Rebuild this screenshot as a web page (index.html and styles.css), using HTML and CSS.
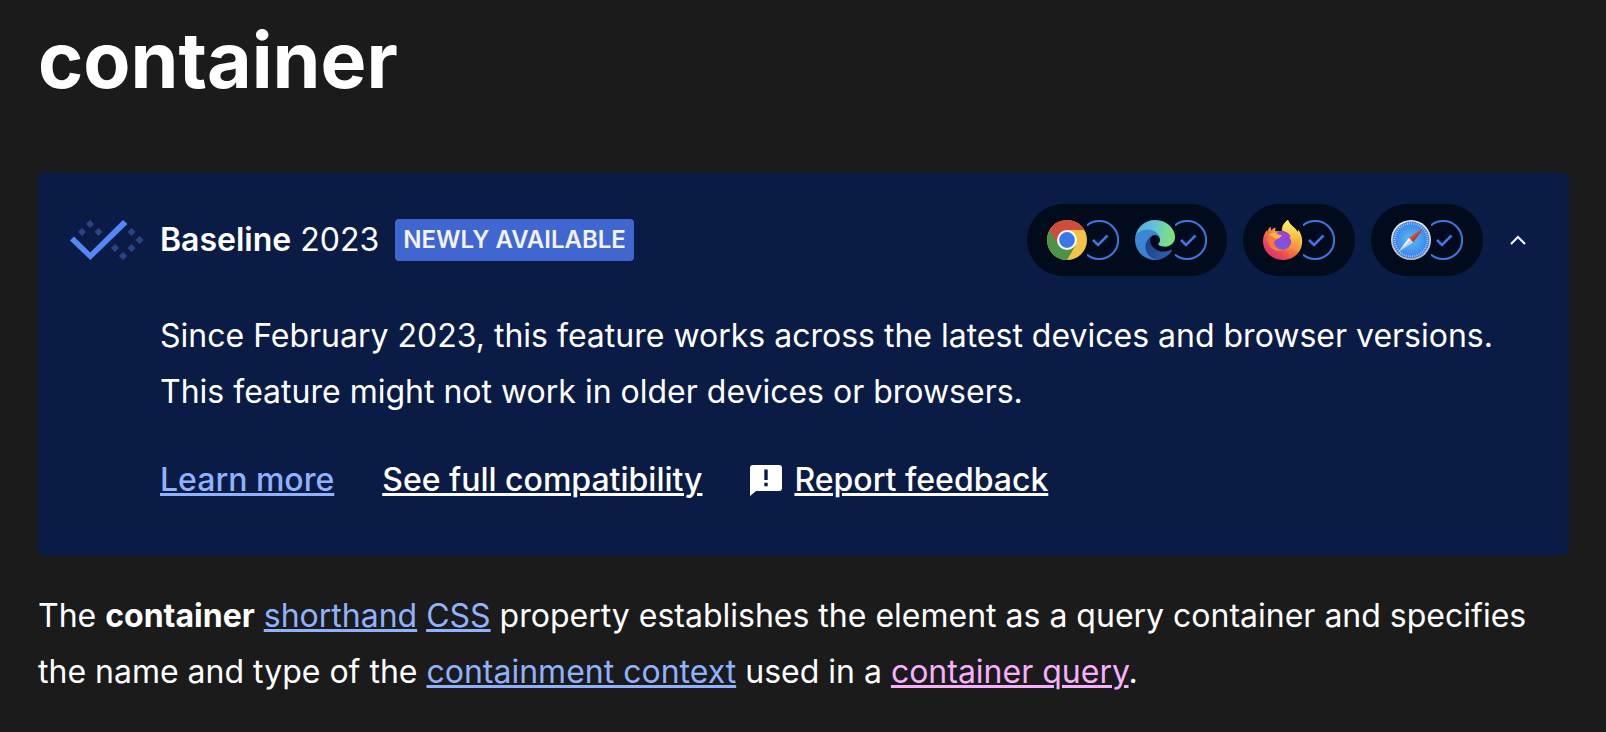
FILE: index.html
```html
<!DOCTYPE html>
<html lang="en">
<head>
    <meta charset="UTF-8">
    <meta name="viewport" content="width=device-width, initial-scale=1.0">
    <title>container - CSS</title>
    <link rel="stylesheet" href="styles.css">
</head>
<body>
    <!-- Shared shapes -->
    <svg class="sprite" aria-hidden="true">
        <symbol id="check" viewBox="0 0 32 40">
            <path d="M0 5.4A19 19 0 1 1 0 34.6" fill="none" stroke="#3f76e4" stroke-width="2"/>
            <path d="M6 20l5 5 9.500-9.500" fill="none" stroke="#3f76e4" stroke-width="2.500"/>
        </symbol>
    </svg>

    <main class="content">
        <h1>container</h1>

        <section class="baseline">
            <div class="baseline-header">
                <svg class="baseline-logo" viewBox="0 0 74 40" aria-hidden="true">
                    <path fill="#2c4487" d="M20 0l4 4-4 4-4-4zM12 8l4 4-4 4-4-4zM28.500 8l4 4-4 4-4-4zM61.500 8l4 4-4 4-4-4zM69.500 16l4 4-4 4-4-4zM61.500 24l4 4-4 4-4-4zM45 24l4 4-4 4-4-4zM53 32l4 4-4 4-4-4z"/>
                    <path fill="#5686fb" d="M0 20.500l4-4 16.300 16L53 0l4.500 4-37.200 36z"/>
                </svg>
                <h2><strong>Baseline</strong> 2023</h2>
                <span class="badge">Newly available</span>

                <!-- Browser support -->
                <div class="browsers">
                    <div class="engine">
                        <span class="browser" role="img" aria-label="Chrome: supported">
                            <svg class="browser-icon" viewBox="0 0 40 40">
                                <circle cx="20" cy="20" r="20" fill="#f3c347"/>
                                <path fill="#4a934a" d="M2.700 10A20 20 0 0 0 20 40l8.700-15L20 20z"/>
                                <path fill="#d04b3a" d="M2.700 10A20 20 0 0 1 37.300 10H20l-8.700 15z"/>
                                <circle cx="20" cy="20" r="10" fill="#fff"/>
                                <circle cx="20" cy="20" r="7.900" fill="#3b78e3"/>
                            </svg>
                            <svg class="check-icon"><use href="#check"/></svg>
                        </span>
                        <span class="browser" role="img" aria-label="Edge: supported">
                            <svg class="browser-icon" viewBox="4.600 4.700 256 256">
                                <defs>
                                    <linearGradient id="edge-dark" x1="0" y1="0" x2="1" y2="0.300">
                                        <stop offset="0" stop-color="#183f7c"/>
                                        <stop offset="1" stop-color="#2b5ea8"/>
                                    </linearGradient>
                                    <linearGradient id="edge-blue" x1="0.500" y1="0" x2="0.300" y2="1">
                                        <stop offset="0" stop-color="#3b8ad3"/>
                                        <stop offset="1" stop-color="#3a82d6"/>
                                    </linearGradient>
                                    <linearGradient id="edge-top" x1="0" y1="0.500" x2="1" y2="0.600">
                                        <stop offset="0" stop-color="#4fb0e3"/>
                                        <stop offset="0.450" stop-color="#62c1d8"/>
                                        <stop offset="0.750" stop-color="#76d99a"/>
                                        <stop offset="1" stop-color="#80e078"/>
                                    </linearGradient>
                                </defs>
                                <path fill="url(#edge-dark)" d="M235.700 195.200a94 94 0 0 1-10.500 4.700 101.900 101.900 0 0 1-35.900 6.500c-47.300 0-88.600-32.500-88.600-74.300a31.500 31.500 0 0 1 16.400-27.500c-42.800 1.800-53.800 46.400-53.800 72.500 0 73.900 68.100 81.400 82.800 81.400 7.900 0 19.800-2.300 27-4.600l1.300-.4a128.300 128.300 0 0 0 66.600-52.800 4 4 0 0 0-5.300-5.500z"/>
                                <path fill="url(#edge-blue)" d="M110.300 246.300A79.200 79.200 0 0 1 87.600 225a80.700 80.700 0 0 1 29.500-120.400c3.100-1.400 8.500-4.100 15.600-4a32.400 32.400 0 0 1 25.700 13 31.900 31.900 0 0 1 6.300 18.700c0-.2 24.500-79.600-80-79.600-43.900 0-80 41.700-80 78.200a130.200 130.200 0 0 0 12.100 56 128 128 0 0 0 156.400 67.100 75.600 75.600 0 0 1-62.800-8z"/>
                                <path fill="url(#edge-top)" d="M156.900 153.800c-.8 1-3.300 2.500-3.300 5.600 0 2.600 1.700 5.200 4.800 7.300 14.300 10 41.400 8.600 41.500 8.600a59.600 59.600 0 0 0 30.300-8.300 61.400 61.400 0 0 0 30.400-52.900c.3-22.400-8-37.300-11.300-43.900C228.100 28.800 182.400 4.700 132.600 4.700a128 128 0 0 0-128 126.200c.5-36.500 36.800-66 80-66 3.500 0 23.500.3 42 10 16.300 8.600 24.900 19 30.900 29.200 6.200 10.700 7.200 24.200 7.200 29.500s-2.700 13.400-7.800 20.200z"/>
                            </svg>
                            <svg class="check-icon"><use href="#check"/></svg>
                        </span>
                    </div>
                    <div class="engine">
                        <span class="browser" role="img" aria-label="Firefox: supported">
                            <svg class="browser-icon" viewBox="0 0 40 40">
                                <defs>
                                    <linearGradient id="fox-body" x1="0.850" y1="0.100" x2="0.200" y2="0.950">
                                        <stop offset="0" stop-color="#fff05a"/>
                                        <stop offset="0.300" stop-color="#fbc345"/>
                                        <stop offset="0.550" stop-color="#f4763e"/>
                                        <stop offset="0.800" stop-color="#ea4656"/>
                                        <stop offset="1" stop-color="#d52f78"/>
                                    </linearGradient>
                                    <linearGradient id="fox-globe" x1="0.600" y1="0" x2="0.300" y2="1">
                                        <stop offset="0" stop-color="#a33bd6"/>
                                        <stop offset="1" stop-color="#6d5ce4"/>
                                    </linearGradient>
                                    <linearGradient id="fox-flame" x1="0.500" y1="0" x2="0.500" y2="1">
                                        <stop offset="0" stop-color="#fff268"/>
                                        <stop offset="0.500" stop-color="#fbc844"/>
                                        <stop offset="1" stop-color="#f4863e"/>
                                    </linearGradient>
                                </defs>
                                <path fill="url(#fox-body)" d="M25 0c1 4 5 6 7.500 9 1.200 1.300 1.800 2.500 2.300 3.800l.4-3.300c3.300 4.500 4.500 9.500 3.700 15C37.600 33.500 29.500 40 19.500 40 8.700 40 0 31.500 0 21c0-4.200 1.500-8.300 4-11l.3 2C5 9.500 6 8 7.500 6.500l.8 4c1.300-1.200 2.500-2.300 4.200-3L12 11c2.500.3 4.700.5 7 0-.8-4.500 2.300-8.700 6-11z"/>
                                <circle cx="19.500" cy="20" r="9.200" fill="url(#fox-globe)"/>
                                <path fill="#f47a3d" d="M5 15c2.500-1.500 4.700-3 8-2.300 1.500 1.500 3.200 2.300 5.700 2.600-.5 2.500-3 3.200-5.200 4.300-1.700 1-2.600 2.500-2.200 4.400C12.500 28 16 30 20 30c-3 2-8 1-11-1.500C5 25 4 20 5 15z"/>
                                <path fill="#fbb540" d="M6 14.500c2-1.500 4.500-2.300 7-1.800 1.500 1.500 3.200 2.300 5.700 2.600-1 2.400-3.500 2.800-5.500 3.600-2-.8-4.500-3-7.200-4.400z"/>
                                <path fill="url(#fox-flame)" d="M25 0c-4.500 3-5.500 7-4 11 3 1 6 3 7.500 6.500-.6-.5-1.500-1-2.500-1 3.500 5 3 10-1.500 13 5 1.500 10-2 10.500-7.500.6 2 .5 4-.2 6.500 2.500-3.500 3.400-8 2.200-12.500C34 8 27 6 25 0z"/>
                            </svg>
                            <svg class="check-icon"><use href="#check"/></svg>
                        </span>
                    </div>
                    <div class="engine">
                        <span class="browser" role="img" aria-label="Safari: supported">
                            <svg class="browser-icon" viewBox="0 0 40 40">
                                <defs>
                                    <radialGradient id="safari-dial">
                                        <stop offset="0" stop-color="#55bff2"/>
                                        <stop offset="1" stop-color="#3b80ea"/>
                                    </radialGradient>
                                    <linearGradient id="safari-rim" x1="0" y1="0" x2="0" y2="1">
                                        <stop offset="0" stop-color="#f2f2f2"/>
                                        <stop offset="1" stop-color="#b8b8b8"/>
                                    </linearGradient>
                                </defs>
                                <circle cx="20" cy="20" r="20" fill="url(#safari-rim)"/>
                                <circle cx="20" cy="20" r="18.400" fill="url(#safari-dial)"/>
                                <circle cx="20" cy="20" r="16.500" fill="none" stroke="#d6eaff" stroke-width="2" stroke-dasharray="0.600 1.560"/>
                                <path fill="#e0493f" d="M32.500 8L17.800 17.800l4.400 4.400z"/>
                                <path fill="#b93835" d="M32.500 8L20 20l2.200 2.200z"/>
                                <path fill="#f5f5f5" d="M7.500 32l10.300-14.200L20 20z"/>
                                <path fill="#c9d3dc" d="M7.500 32L20 20l2.200 2.200z"/>
                            </svg>
                            <svg class="check-icon"><use href="#check"/></svg>
                        </span>
                    </div>
                </div>

                <button class="toggle" type="button" aria-label="Hide details" aria-expanded="true">
                    <svg viewBox="0 0 16 10" aria-hidden="true">
                        <path d="M1 9l7-7 7 7" fill="none" stroke="#fff" stroke-width="2"/>
                    </svg>
                </button>
            </div>

            <div class="baseline-details">
                <p>Since February 2023, this feature works across the latest devices and browser versions. This feature might not work in older devices or browsers.</p>
                <ul class="links">
                    <li><a class="learn-more" href="#learn-more">Learn more</a></li>
                    <li><a href="#browser_compatibility">See full compatibility</a></li>
                    <li class="feedback">
                        <svg viewBox="0 0 32 32" aria-hidden="true">
                            <path fill="#fff" fill-rule="evenodd" d="M3 1h26a3 3 0 0 1 3 3v20a3 3 0 0 1-3 3H6l-6 5V4a3 3 0 0 1 3-3zM14.300 5.500v10.500h3.400V5.500zM14.300 18.800v3.400h3.400v-3.400z"/>
                        </svg>
                        <a href="#feedback">Report feedback</a>
                    </li>
                </ul>
            </div>
        </section>

        <p class="summary">The <strong>container</strong> <a href="#shorthand">shorthand</a> <a href="#css">CSS</a> property establishes the element as a query container and specifies the name and type of the <a href="#containment">containment context</a> used in a <a class="visited" href="#container-query">container query</a>.</p>
    </main>
</body>
</html>
```
FILE: styles.css
```css
* {
    margin: 0;
    padding: 0;
    box-sizing: border-box;
}

body {
    background-color: #1b1b1b;
    color: #fff;
    font-family: Inter, "Liberation Sans", sans-serif;
    font-size: 32px;
    line-height: 56px;
}

.sprite {
    display: none;
}

svg {
    display: block;
    flex-shrink: 0;
}

.content {
    padding: 12px 37px 32px 38px;
}

h1 {
    margin-bottom: 64px;
    font-size: 77px;
    font-weight: 700;
    line-height: 96px;
}

a {
    color: #90b2fc;
    text-decoration-thickness: 3px;
}

a.visited {
    color: #f7b0fc;
}

/* Baseline card */
.baseline {
    margin-bottom: 32px;
    padding: 32px 32px 48px;
    border-radius: 8px;
    background-color: #0a1c45;
}

.baseline-header {
    display: flex;
    align-items: center;
    gap: 16px;
    margin-bottom: 32px;
}

.baseline-logo {
    width: 74px;
    height: 40px;
}

h2 {
    font-size: 32px;
    font-weight: 400;
}

h2 strong {
    font-weight: 600;
}

.badge {
    padding: 0 8px;
    border-radius: 4px;
    background-color: #4067d0;
    color: #f2f3f8;
    font-size: 24px;
    font-weight: 600;
    line-height: 42px;
    text-transform: uppercase;
}

.browsers {
    display: flex;
    gap: 16px;
    margin-left: auto;
}

.engine {
    display: flex;
    gap: 16px;
    padding: 16px 20px;
    border-radius: 36px;
    background-color: #020b1c;
}

.browser {
    display: flex;
}

.browser-icon {
    width: 40px;
    height: 40px;
}

.check-icon {
    width: 32px;
    height: 40px;
}

.toggle {
    display: flex;
    justify-content: center;
    width: 38px;
    padding: 12px 0;
    border: none;
    background: none;
    cursor: pointer;
}

.toggle svg {
    width: 16px;
    height: 10px;
}

.baseline-details {
    padding-left: 90px;
}

.baseline-details p {
    margin-bottom: 32px;
}

.links {
    display: flex;
    flex-wrap: wrap;
    gap: 0 48px;
    list-style: none;
    font-weight: 500;
}

.links a {
    color: #fff;
}

.links .learn-more {
    color: #90b2fc;
}

.feedback {
    display: flex;
    align-items: center;
    gap: 12px;
}

.feedback svg {
    width: 32px;
    height: 32px;
}

.summary strong {
    font-weight: 700;
}
```
